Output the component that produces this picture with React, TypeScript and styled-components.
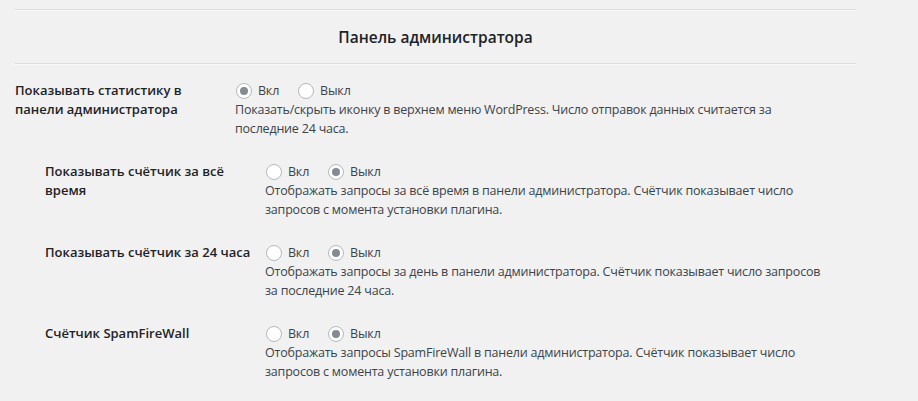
import React, { useState } from 'react';
import styled, { createGlobalStyle } from 'styled-components';

const GlobalStyle = createGlobalStyle`
  html, body {
    margin: 0;
    padding: 0;
    background: #f1f1f1;
  }
  body {
    font-family: "Open Sans", "Noto Sans", sans-serif;
    color: #3c434a;
    font-size: 13px;
  }
`;

const Page = styled.div`
  width: 841px;
  padding: 9px 0 0 15px;
`;

const Divider = styled.hr`
  margin: 0;
  height: 0;
  border: 0;
  border-top: 1px solid #dcdcde;
  border-bottom: 1px solid #fafafa;
`;

const Title = styled.h2`
  margin: 0;
  height: 52px;
  line-height: 52px;
  text-align: center;
  font-size: 15.5px;
  font-weight: 600;
  color: #1d2327;
`;

const Rows = styled.div`
  display: flex;
  flex-direction: column;
  padding-top: 16px;
`;

const Row = styled.div<{ $indent?: boolean }>`
  display: flex;
  padding-left: ${(p) => (p.$indent ? '30px' : '0')};
  padding-bottom: 24px;
  min-height: 57px;
`;

const Label = styled.div`
  width: 220px;
  flex: none;
  padding-right: 10px;
  box-sizing: border-box;
  font-weight: 600;
  line-height: 19px;
  color: #1d2327;
`;

const Field = styled.div`
  width: 565px;
  line-height: 19px;
  font-size: 12.5px;
  letter-spacing: -0.2px;
`;

const Options = styled.div`
  display: flex;
  align-items: center;
  gap: 18px;
  height: 19px;
`;

const Option = styled.label`
  display: flex;
  align-items: center;
  gap: 6px;
  cursor: pointer;
`;

const Radio = styled.input.attrs({ type: 'radio' })`
  appearance: none;
  margin: 0 0 0 1px;
  width: 16px;
  height: 16px;
  border-radius: 50%;
  border: 1px solid #b4b9be;
  background: #fff;
  box-sizing: border-box;
  display: grid;
  place-items: center;
  cursor: pointer;
  &:checked::before {
    content: '';
    width: 8px;
    height: 8px;
    border-radius: 50%;
    background: #858b92;
  }
`;

const Description = styled.p`
  margin: 0;
  color: #3c434a;
`;

type Setting = {
  id: string;
  label: string;
  description: string;
  on: boolean;
  indent?: boolean;
};

const settings: Setting[] = [
  {
    id: 'stats',
    label: 'Показывать статистику в панели администратора',
    description:
      'Показать/скрыть иконку в верхнем меню WordPress. Число отправок данных считается за последние 24 часа.',
    on: true,
  },
  {
    id: 'all_time',
    label: 'Показывать счётчик за всё время',
    description:
      'Отображать запросы за всё время в панели администратора. Счётчик показывает число запросов с момента установки плагина.',
    on: false,
    indent: true,
  },
  {
    id: 'daily',
    label: 'Показывать счётчик за 24 часа',
    description:
      'Отображать запросы за день в панели администратора. Счётчик показывает число запросов за последние 24 часа.',
    on: false,
    indent: true,
  },
  {
    id: 'sfw',
    label: 'Счётчик SpamFireWall',
    description:
      'Отображать запросы SpamFireWall в панели администратора. Счётчик показывает число запросов с момента установки плагина.',
    on: false,
    indent: true,
  },
];

const SettingRow: React.FC<{ setting: Setting }> = ({ setting }) => {
  const [on, setOn] = useState(setting.on);
  return (
    <Row $indent={setting.indent}>
      <Label>{setting.label}</Label>
      <Field>
        <Options>
          <Option>
            <Radio name={setting.id} checked={on} onChange={() => setOn(true)} />
            Вкл
          </Option>
          <Option>
            <Radio name={setting.id} checked={!on} onChange={() => setOn(false)} />
            Выкл
          </Option>
        </Options>
        <Description>{setting.description}</Description>
      </Field>
    </Row>
  );
};

export default function App() {
  return (
    <>
      <GlobalStyle />
      <Page>
        <Divider />
        <Title>Панель администратора</Title>
        <Divider />
        <Rows>
          {settings.map((s) => (
            <SettingRow key={s.id} setting={s} />
          ))}
        </Rows>
      </Page>
    </>
  );
}
